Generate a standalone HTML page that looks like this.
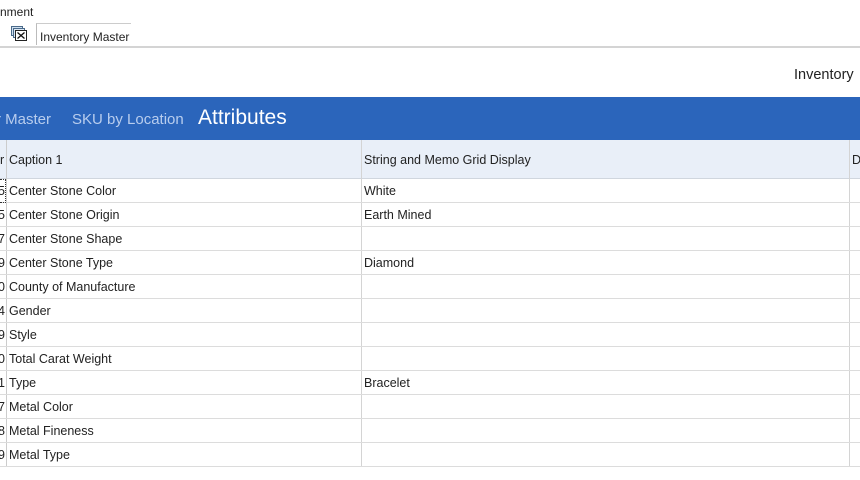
<!DOCTYPE html>
<html><head><style>
body{margin:0;width:860px;height:480px;overflow:hidden;background:#fff;font-family:"Liberation Sans",sans-serif;position:relative;color:#222}
.a{position:absolute;white-space:nowrap}
.t{font-size:12.5px}
</style></head><body>
<div class="a t" style="left:0;top:5px;font-size:12px">nment</div>
<svg class="a" style="left:11px;top:26px" width="17" height="16" viewBox="0 0 17 16"><rect x="0.5" y="0.5" width="11" height="9" fill="#cfe0f0" stroke="#4a6a8a"/><rect x="2.5" y="2.5" width="11" height="9" fill="#dce8f4" stroke="#4a6a8a"/><rect x="4.5" y="4.5" width="11" height="10" fill="#fff" stroke="#222"/><path d="M6.5 6.5l7 6M13.5 6.5l-7 6" stroke="#111" stroke-width="1.3"/></svg>
<div class="a" style="left:36px;top:23px;width:94px;height:21px;border-left:1px solid #bbb;border-top:1px solid #ccc"></div>
<div class="a t" style="left:40px;top:30px;font-size:12px">Inventory Master</div>
<div class="a" style="left:0;top:46px;width:860px;height:2px;background:#d4d4d4"></div>
<div class="a" style="left:794px;top:67px;font-size:14.5px">Inventory</div>
<div class="a" style="left:0;top:97px;width:860px;height:43px;background:#2b65bb"></div>
<div class="a" style="left:-4px;top:111px;font-size:15px;color:#b8cdee">r Master</div>
<div class="a" style="left:72px;top:111px;font-size:15px;color:#b8cdee">SKU by Location</div>
<div class="a" style="left:198px;top:106px;font-size:21px;color:#fff">Attributes</div>
<div class="a" style="left:0;top:140px;width:860px;height:38px;background:#e9eff8;border-bottom:1px solid #d0d6de"></div>
<div class="a" style="left:6px;top:140px;width:1px;height:326px;background:#ccc"></div>
<div class="a" style="left:361px;top:140px;width:1px;height:326px;background:#d4d4d4"></div>
<div class="a" style="left:849px;top:140px;width:1px;height:326px;background:#d4d4d4"></div>
<div class="a t" style="left:0;top:153px">r</div>
<div class="a t" style="left:9px;top:153px">Caption 1</div>
<div class="a t" style="left:364px;top:153px">String and Memo Grid Display</div>
<div class="a t" style="left:852px;top:153px">D</div>
<div id="rows"></div>
<script>
var r=[["5","Center Stone Color","White"],["5","Center Stone Origin","Earth Mined"],["7","Center Stone Shape",""],["9","Center Stone Type","Diamond"],["0","County of Manufacture",""],["4","Gender",""],["9","Style",""],["0","Total Carat Weight",""],["1","Type","Bracelet"],["7","Metal Color",""],["8","Metal Fineness",""],["9","Metal Type",""]];
var h="";r.forEach(function(x,i){var y=178+i*24;
h+='<div class="a t" style="left:-2px;top:'+(y+6)+'px">'+x[0]+'</div><div class="a t" style="left:9px;top:'+(y+6)+'px">'+x[1]+'</div><div class="a t" style="left:364px;top:'+(y+6)+'px">'+x[2]+'</div><div class="a" style="left:0;top:'+(y+24)+'px;width:860px;height:1px;background:#dcdcdc"></div>';});
document.getElementById("rows").innerHTML=h;
</script>
<div class="a" style="left:0;top:179px;width:5px;height:22px;border:1px dotted #333;border-left:none"></div>
</body></html>
